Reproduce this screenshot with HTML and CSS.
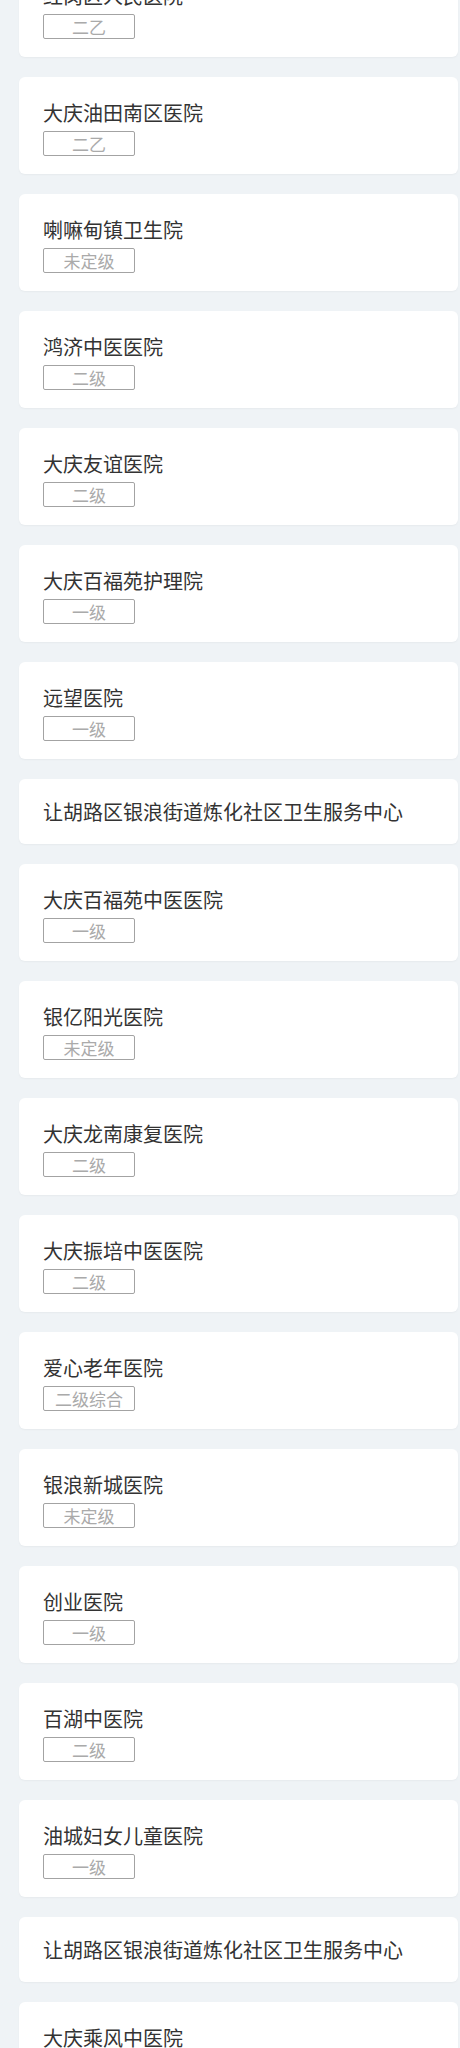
FILE: index.html
```html
<!DOCTYPE html>
<html lang="zh-CN">
<head>
<meta charset="utf-8">
<title>医院列表</title>
<link rel="stylesheet" href="styles.css">
</head>
<body>
<ul class="list">
  <li class="card"><div class="name">红岗区人民医院</div><span class="tag">二乙</span></li>
  <li class="card"><div class="name">大庆油田南区医院</div><span class="tag">二乙</span></li>
  <li class="card"><div class="name">喇嘛甸镇卫生院</div><span class="tag">未定级</span></li>
  <li class="card"><div class="name">鸿济中医医院</div><span class="tag">二级</span></li>
  <li class="card"><div class="name">大庆友谊医院</div><span class="tag">二级</span></li>
  <li class="card"><div class="name">大庆百福苑护理院</div><span class="tag">一级</span></li>
  <li class="card"><div class="name">远望医院</div><span class="tag">一级</span></li>
  <li class="card card--plain"><div class="name">让胡路区银浪街道炼化社区卫生服务中心</div></li>
  <li class="card"><div class="name">大庆百福苑中医医院</div><span class="tag">一级</span></li>
  <li class="card"><div class="name">银亿阳光医院</div><span class="tag">未定级</span></li>
  <li class="card"><div class="name">大庆龙南康复医院</div><span class="tag">二级</span></li>
  <li class="card"><div class="name">大庆振培中医医院</div><span class="tag">二级</span></li>
  <li class="card"><div class="name">爱心老年医院</div><span class="tag">二级综合</span></li>
  <li class="card"><div class="name">银浪新城医院</div><span class="tag">未定级</span></li>
  <li class="card"><div class="name">创业医院</div><span class="tag">一级</span></li>
  <li class="card"><div class="name">百湖中医院</div><span class="tag">二级</span></li>
  <li class="card"><div class="name">油城妇女儿童医院</div><span class="tag">一级</span></li>
  <li class="card card--plain"><div class="name">让胡路区银浪街道炼化社区卫生服务中心</div></li>
  <li class="card"><div class="name">大庆乘风中医院</div><span class="tag">二级</span></li>
</ul>
</body>
</html>
```

FILE: styles.css
```css
html, body {
  margin: 0;
  padding: 0;
  background: #eff3f6;
}

body {
  font-family: "Noto Sans CJK SC", "Noto Sans", sans-serif;
  overflow: hidden;
}

.list {
  list-style: none;
  margin: -40px 0 0 0;
  padding: 0 2px 0 19px;
  display: flex;
  flex-direction: column;
  gap: 20px;
}

.card {
  background: #ffffff;
  border-radius: 6px;
  box-shadow: 0 1px 2px rgba(0, 0, 0, 0.04);
  padding: 21px 25px 18px 24px;
  height: 97px;
  box-sizing: border-box;
  display: flex;
  flex-direction: column;
  align-items: flex-start;
}

.card--plain {
  height: 65px;
  padding-top: 18px;
  padding-bottom: 17px;
}

.name {
  font-size: 20px;
  line-height: 30px;
  color: #333333;
  white-space: nowrap;
}

.tag {
  margin-top: 3px;
  width: 92px;
  height: 25px;
  box-sizing: border-box;
  border: 1px solid #a3a3a3;
  border-radius: 2px;
  font-size: 17px;
  line-height: 23px;
  color: #aaaaaa;
  text-align: center;
}
```
